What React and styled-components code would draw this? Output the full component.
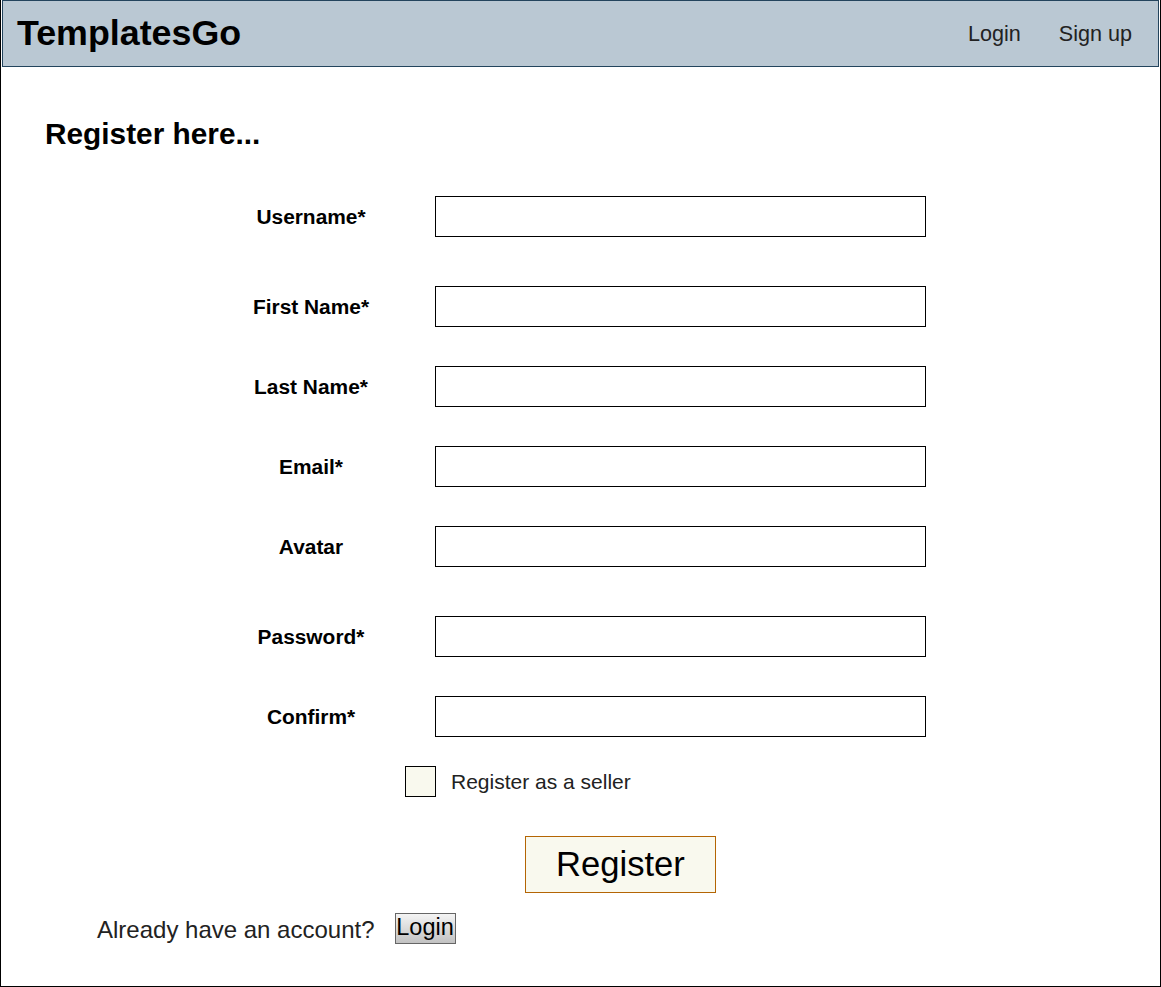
import React from 'react';
import styled, { createGlobalStyle } from 'styled-components';

const GlobalStyle = createGlobalStyle`
    body {
        margin: 0;
        font-family: "Liberation Sans", Arial, sans-serif;
        background: #ffffff;
    }
`

const fields = [
    { label: 'Username*', gap: 45 },
    { label: 'First Name*', gap: 49 },
    { label: 'Last Name*', gap: 39 },
    { label: 'Email*', gap: 39 },
    { label: 'Avatar', gap: 39 },
    { label: 'Password*', gap: 49, type: 'password' },
    { label: 'Confirm*', gap: 39, type: 'password' },
]

function App() {
    return (
        <>
            <GlobalStyle />
            <Frame>
                <Header>
                    <Brand>TemplatesGo</Brand>
                    <Nav>
                        <NavLink>Login</NavLink>
                        <NavLink>Sign up</NavLink>
                    </Nav>
                </Header>
                <Main>
                    <Title>Register here...</Title>
                    {fields.map((f) => (
                        <FieldRow key={f.label} $gap={f.gap}>
                            <FieldLabel>{f.label}</FieldLabel>
                            <TextInput type={f.type || 'text'} />
                        </FieldRow>
                    ))}
                    <CheckRow>
                        <CheckBox />
                        <CheckText>Register as a seller</CheckText>
                    </CheckRow>
                    <SubmitBtn>Register</SubmitBtn>
                    <Footer>
                        <FooterText>Already have an account?</FooterText>
                        <SmallBtn>Login</SmallBtn>
                    </Footer>
                </Main>
            </Frame>
        </>
    );
}

const Frame = styled.div`
    box-sizing: border-box;
    width: 1161px;
    height: 987px;
    border: 1px solid #000;
    border-top: none;
    display: flex;
    flex-direction: column;
`

const Header = styled.header`
    box-sizing: border-box;
    height: 67px;
    margin: 0 1px;
    background-color: #bac8d3;
    border: 1px solid #23445d;
    display: flex;
    align-items: center;
    justify-content: space-between;
    padding: 0 26px 0 14px;
`

const Brand = styled.div`
    font-size: 35.8px;
    font-weight: bold;
    color: #000;
    line-height: 1;
`

const Nav = styled.nav`
    display: flex;
    gap: 38px;
`

const NavLink = styled.span`
    font-size: 21.6px;
    color: #222;
`

const Main = styled.main`
    display: flex;
    flex-direction: column;
    padding-top: 50px;
`

const Title = styled.h2`
    margin: 0 0 0 44px;
    font-size: 29.8px;
    line-height: 34px;
    font-weight: bold;
    color: #000;
`

const FieldRow = styled.div`
    display: flex;
    align-items: center;
    margin-top: ${(props) => props.$gap}px;
    padding-left: 250px;
`

const FieldLabel = styled.label`
    width: 120px;
    margin-right: 64px;
    text-align: center;
    font-size: 20.9px;
    font-weight: bold;
    color: #000;
`

const TextInput = styled.input`
    box-sizing: border-box;
    width: 491px;
    height: 41px;
    border: 1px solid #000;
    border-radius: 0;
    outline: none;
    padding: 0 8px;
    font-size: 18px;
    font-family: inherit;
`

const CheckRow = styled.div`
    display: flex;
    align-items: center;
    margin-top: 29px;
    padding-left: 404px;
    gap: 15px;
`

const CheckBox = styled.div`
    box-sizing: border-box;
    width: 31px;
    height: 31px;
    border: 1px solid #000;
    background-color: #f9f9ee;
`

const CheckText = styled.span`
    font-size: 21px;
    color: #222;
    margin-top: 1px;
`

const SubmitBtn = styled.button`
    box-sizing: border-box;
    align-self: flex-start;
    margin: 39px 0 0 524px;
    width: 191px;
    height: 57px;
    border: 1px solid #b46504;
    border-radius: 0;
    background-color: #f9f9ee;
    font-family: inherit;
    font-size: 34.6px;
    color: #000;
    padding: 0;
`

const Footer = styled.div`
    display: flex;
    align-items: center;
    margin-top: 19px;
    padding-left: 96px;
    gap: 20px;
`

const FooterText = styled.span`
    font-size: 24px;
    color: #222;
    margin-top: 4px;
`

const SmallBtn = styled.button`
    box-sizing: border-box;
    width: 61px;
    height: 31px;
    padding: 0;
    border: 1px solid #666;
    border-radius: 0;
    background: linear-gradient(#f4f4f4, #c2c2c2);
    font-family: inherit;
    font-size: 23.5px;
    line-height: 1;
    color: #000;
`

export default App;
